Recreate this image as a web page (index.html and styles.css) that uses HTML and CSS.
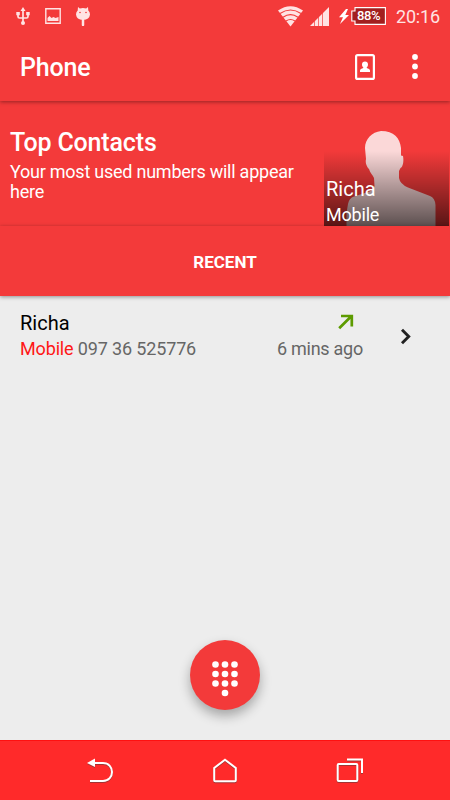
FILE: index.html
```html
<!DOCTYPE html>
<html lang="en">
<head>
    <meta charset="UTF-8">
    <meta name="viewport" content="width=device-width, initial-scale=1.0">
    <title>Phone</title>
    <link rel="stylesheet" href="styles.css">
</head>
<body>
    <div class="status-bar">
        <svg class="status-usb" width="14" height="18" viewBox="0 0 14 18">
            <path d="M7 2v13M2 6v3.500q0 1.500 1.500 1.500H7M12 6v3.500q0 1.500-1.500 1.500H7" fill="none" stroke="currentColor" stroke-width="1.700"/>
            <path d="M7 0l2.500 4h-5zM.3 5h3.500v3.300H.3zM10.200 5h3.500v3.300h-3.500z" fill="currentColor"/>
            <circle cx="7" cy="16" r="2" fill="currentColor"/>
        </svg>
        <svg class="status-image" width="16" height="16" viewBox="0 0 16 16">
            <path d="M.8.8h14.400v14.400H.8z" fill="none" stroke="currentColor" stroke-width="1.400"/>
            <path d="M2.500 13v-3l2-2 2 2 2-1 2 1 3-1v4z" fill="currentColor"/>
        </svg>
        <svg class="status-android" width="14" height="19" viewBox="0 0 14 19">
            <path d="M2 0l1.800 1.600Q7 .4 10.200 1.600L12 0l.3 3.500Q14 5 14 7.500 13.500 12.500 7 13 .5 12.500 0 7.500 0 5 1.700 3.500z" fill="currentColor"/>
            <path d="M7 13v5" stroke="currentColor" stroke-width="2.500" stroke-linecap="round"/>
            <circle cx="4" cy="5.500" r=".8" fill="#f33a3a"/>
            <circle cx="10" cy="5.500" r=".8" fill="#f33a3a"/>
        </svg>
        <div class="status-right">
            <svg class="status-wifi" width="25" height="21" viewBox="0 0 25 21">
                <path d="M12.500 20.500L0 4.500Q12.500-4 25 4.500z" fill="currentColor"/>
                <path d="M2 7.500q10.500-7 21 0M5 11.200q7.500-5 15 0M8 15q4.500-3 9 0" fill="none" stroke="#f33a3a" stroke-width="1.200"/>
            </svg>
            <svg class="status-signal" width="19" height="19" viewBox="0 0 19 19">
                <path d="M0 19L19 0v19z" fill="currentColor"/>
                <path d="M4.500 13v6M8.500 9v10M12.500 5v14" stroke="#f33a3a" stroke-width=".7"/>
            </svg>
            <svg class="status-bolt" width="10" height="15" viewBox="0 0 10 15">
                <path d="M7 0L0 8.300h4L1 15l9-9H6.300L9 0z" fill="#fff"/>
            </svg>
            <div class="battery">
                <svg width="35" height="18" viewBox="0 0 35 18">
                    <path d="M4 .6h30.400v16.800H4v-3.400H.8V4H4z" fill="#a31f1f" stroke="#fff" stroke-width="1.100"/>
                </svg>
                <span>88%</span>
            </div>
            <span class="clock">20:16</span>
        </div>
    </div>

    <div class="app-bar">
        <h1>Phone</h1>
        <svg class="contacts-icon" width="20" height="26" viewBox="0 0 20 26">
            <rect x="1.100" y="1.100" width="17.800" height="23.800" rx="1.500" fill="none" stroke="#fff" stroke-width="2.200"/>
            <path d="M10 7.500c1.900 0 3 1.200 3 3 0 1.300-.6 2.300-1.300 3v.6c1.800.5 3.300 1.200 3.300 2.500V18H5v-1.400c0-1.300 1.500-2 3.300-2.500v-.6C7.600 12.800 7 11.800 7 10.500c0-1.800 1.100-3 3-3z" fill="#fff"/>
        </svg>
        <svg class="menu-icon" width="6" height="25" viewBox="0 0 6 25">
            <circle cx="3" cy="3" r="2.900" fill="#fff"/>
            <circle cx="3" cy="12.500" r="2.900" fill="#fff"/>
            <circle cx="3" cy="22" r="2.900" fill="#fff"/>
        </svg>
    </div>

    <div class="top-contacts">
        <div class="top-text">
            <h2>Top Contacts</h2>
            <p>Your most used numbers will appear here</p>
        </div>
        <div class="contact-tile">
            <svg width="125" height="125" viewBox="0 0 125 125">
                <path d="M57 30C48 31 41 38 41 47L42 58C41 62 43 66 45 68C46 72 49 74 50 77L50.500 85Q50 89 44 91L30 95.500Q25 97 24 103L22.500 112V125H111.500V104Q111 97 106 95L84 86.500Q76 83 75 77V70L76.500 67C79 66 80 60 79 55L77 54.500V47C76 37 70 30 57 30Z" fill="#fbd8d8"/>
            </svg>
            <div class="tile-label">
                <span class="tile-name">Richa</span>
                <span class="tile-type">Mobile</span>
            </div>
        </div>
    </div>

    <div class="tab">RECENT</div>

    <div class="call-list">
        <div class="call">
            <div class="call-info">
                <div class="call-name">Richa</div>
                <div class="call-number"><span>Mobile</span> 097 36 525776</div>
            </div>
            <div class="call-time">
                <svg width="16" height="16" viewBox="0 0 16 16">
                    <path d="M1.200 14.300L13 2.500M3 2h10.800v10.500" fill="none" stroke="#5d9b00" stroke-width="2.700"/>
                </svg>
                <div>6 mins ago</div>
            </div>
            <svg class="chevron" width="12" height="17" viewBox="0 0 12 17">
                <path d="M2 1.800l6.700 6.700L2 15.200" fill="none" stroke="#212121" stroke-width="2.900"/>
            </svg>
        </div>
        <div class="dial-button">
            <svg width="26" height="36" viewBox="0 0 26 36" fill="#fff">
                <circle cx="3.500" cy="3.500" r="3.300"/><circle cx="13" cy="3.500" r="3.300"/><circle cx="22.500" cy="3.500" r="3.300"/>
                <circle cx="3.500" cy="13" r="3.300"/><circle cx="13" cy="13" r="3.300"/><circle cx="22.500" cy="13" r="3.300"/>
                <circle cx="3.500" cy="22.500" r="3.300"/><circle cx="13" cy="22.500" r="3.300"/><circle cx="22.500" cy="22.500" r="3.300"/>
                <circle cx="13" cy="32" r="3.300"/>
            </svg>
        </div>
    </div>

    <div class="nav-bar">
        <svg width="28" height="26" viewBox="0 0 28 26">
            <path d="M7 5h10c12 0 12 18 0 18H4" fill="none" stroke="#fff" stroke-width="2"/>
            <path d="M1 5l8-4.500v8.500z" fill="#fff"/>
        </svg>
        <svg width="28" height="26" viewBox="0 0 28 26">
            <path d="M14 1.700L24.800 10v12.300q0 1-1 1H4.200q-1 0-1-1V10z" fill="none" stroke="#fff" stroke-width="2"/>
        </svg>
        <svg width="28" height="26" viewBox="0 0 28 26">
            <path d="M2.700 6h17.600q1 0 1 1v15q0 1-1 1H2.700q-1 0-1-1V7q0-1 1-1zM11 1.500h15V15" fill="none" stroke="#fff" stroke-width="2"/>
        </svg>
    </div>
</body>
</html>
```
FILE: styles.css
```css
* {
    margin: 0;
    padding: 0;
    box-sizing: border-box;
    font-family: Roboto, sans-serif;
}

body {
    display: flex;
    flex-direction: column;
    height: 100vh;
    overflow: hidden;
    background-color: #ededed;
    color: #fff;
}

svg {
    display: block;
    flex-shrink: 0;
}

.status-bar {
    position: relative;
    z-index: 1;
    height: 32px;
    padding: 0 10px 0 16px;
    background-color: #f33a3a;
    color: #ffe3e3;
    display: flex;
    align-items: center;
}

.status-image {
    margin-left: 15px;
}

.status-android {
    margin-left: 15px;
}

.status-right {
    margin-left: auto;
    display: flex;
    align-items: center;
}

.status-signal {
    margin-left: 7px;
}

.status-bolt {
    margin-left: 10px;
}

.battery {
    position: relative;
    margin-left: 2px;
}

.battery span {
    position: absolute;
    top: 2px;
    left: 6px;
    color: #fff;
    font-size: 13px;
    font-weight: 500;
    letter-spacing: -0.4px;
    line-height: 14px;
}

.clock {
    width: 44px;
    margin-left: 10px;
    font-size: 18px;
    letter-spacing: -0.2px;
    white-space: nowrap;
}

.app-bar {
    position: relative;
    height: 69px;
    padding: 0 32px 0 20px;
    background-color: #f33a3a;
    box-shadow: 0 1px 4px rgba(0, 0, 0, 0.4);
    display: flex;
    align-items: center;
}

.app-bar h1 {
    flex: 1;
    padding-top: 2px;
    font-size: 25px;
    font-weight: 500;
    letter-spacing: -0.2px;
}

.menu-icon {
    margin-left: 37px;
}

.top-contacts {
    height: 125px;
    padding-right: 1px;
    background-color: #f33a3a;
    display: flex;
}

.top-text {
    flex: 1;
    padding: 27px 20px 0 10px;
}

.top-text h2 {
    font-size: 25px;
    font-weight: 500;
    letter-spacing: -0.15px;
    line-height: 30px;
}

.top-text p {
    margin-top: 4px;
    font-size: 18px;
    letter-spacing: -0.24px;
    line-height: 20px;
}

.contact-tile {
    position: relative;
    width: 125px;
    height: 125px;
}

.tile-label {
    position: absolute;
    left: 0;
    right: 0;
    bottom: 0;
    height: 75px;
    padding: 26px 2px 0;
    background: linear-gradient(rgba(0, 0, 0, 0), rgba(0, 0, 0, 0.63));
    display: flex;
    flex-direction: column;
}

.tile-name {
    font-size: 20px;
    line-height: 25px;
}

.tile-type {
    font-size: 18px;
    letter-spacing: -0.2px;
    line-height: 25px;
}

.tab {
    position: relative;
    height: 70px;
    background-color: #f33a3a;
    box-shadow: 0 1px 4px rgba(0, 0, 0, 0.4);
    font-size: 17px;
    font-weight: 700;
    line-height: 72px;
    text-align: center;
}

.call-list {
    flex: 1;
    display: flex;
    flex-direction: column;
    justify-content: space-between;
    align-items: center;
    padding-bottom: 30px;
}

.call {
    width: 100%;
    height: 80px;
    padding: 14px 38px 0 20px;
    color: #666;
    font-size: 18px;
    display: flex;
}

.call-info {
    flex: 1;
}

.call-name {
    color: #000;
    font-size: 20px;
    line-height: 26px;
}

.call-number {
    letter-spacing: -0.15px;
    line-height: 25px;
}

.call-number span {
    color: #ff1717;
}

.call-time svg {
    margin: 4px 0 6px 61px;
}

.call-time div {
    letter-spacing: -0.25px;
    line-height: 25px;
}

.chevron {
    margin: 18px 0 0 37px;
}

.dial-button {
    width: 70px;
    height: 70px;
    padding-top: 8px;
    border-radius: 50%;
    background-color: #f33a3a;
    box-shadow: 0 6px 12px rgba(0, 0, 0, 0.3);
    display: flex;
    align-items: center;
    justify-content: center;
}

.nav-bar {
    height: 60px;
    padding: 0 37px;
    border-top: 1px solid #ff1010;
    background-color: #ff2a2a;
    display: flex;
    align-items: center;
    justify-content: space-around;
}

.nav-bar svg {
    filter: drop-shadow(0 1px 0 rgba(100, 60, 60, 0.6));
}
```
